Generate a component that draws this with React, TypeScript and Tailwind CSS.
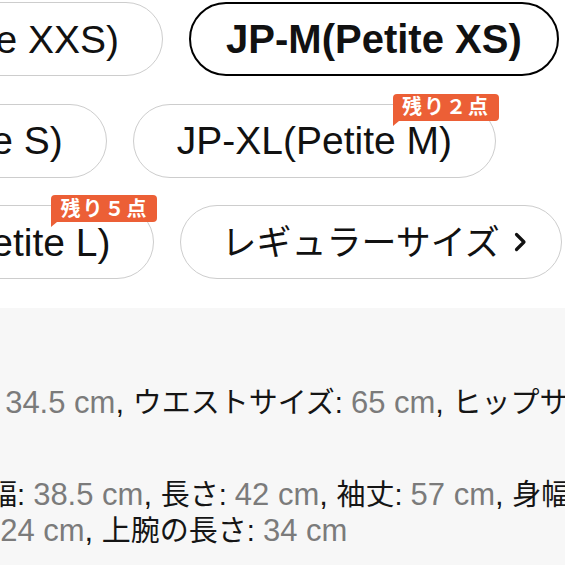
import React from 'react';

type Size = {
  label: string;
  selected?: boolean;
  stock?: string;
};

const rows: Size[][] = [
  [{ label: 'JP-S(Petite XXS)' }, { label: 'JP-M(Petite XS)', selected: true }],
  [{ label: 'JP-L(Petite S)' }, { label: 'JP-XL(Petite M)', stock: '残り２点' }],
  [{ label: 'JP-XXL(Petite L)', stock: '残り５点' }],
];

function StockBadge({ text }: { text: string }) {
  return (
    <span className="absolute -top-[11px] -right-[4px] flex h-[27px] items-center rounded-[4px] rounded-bl-none bg-[#ec5f36] px-[9px] text-[20px] font-bold leading-none tracking-[2px] text-white">
      {text}
      {/* little tail under the badge */}
      <span className="absolute left-0 top-full h-0 w-0 border-r-[6px] border-t-[5px] border-r-transparent border-t-[#ec5f36]" />
    </span>
  );
}

function SizePill({ size }: { size: Size }) {
  if (size.selected) {
    return (
      <div className="relative flex h-[74px] shrink-0 items-center rounded-full border-[2.5px] border-black bg-white px-[35px] text-[40px] font-bold leading-none text-[#111]">
        {size.label}
      </div>
    );
  }
  return (
    <div className="relative flex h-[74px] shrink-0 items-center rounded-full border-[1.5px] border-[#cdcdcd] bg-white px-[43px] text-[39px] leading-none text-[#111]">
      {size.label}
      {size.stock && <StockBadge text={size.stock} />}
    </div>
  );
}

function Measure({ label, value, last }: { label: string; value: string; last?: boolean }) {
  return (
    <>
      <span className="text-[29px] text-[#151515]">{label}: </span>
      <span className="text-[#7b7b7b]">{value}</span>
      {!last && <span className="text-[#151515]">, </span>}
    </>
  );
}

export default function App() {
  return (
    <div className="flex h-[565px] w-[565px] flex-col overflow-hidden bg-white font-['Liberation_Sans','Noto_Sans_CJK_JP',sans-serif]">
      {/* size pills */}
      <div className="flex flex-col gap-[27.5px] pb-[29px] pt-[2px]">
        {rows.map((row, i) => (
          <div key={i} className="-ml-[224px] flex gap-[26px]">
            {row.map((s) => (
              <SizePill key={s.label} size={s} />
            ))}
            {i === 2 && (
              <div className="flex h-[74px] shrink-0 items-center gap-[14px] rounded-full border-[1.5px] border-[#cdcdcd] bg-white pl-[40px] pr-[34px] text-[35px] leading-none text-[#111]">
                レギュラーサイズ
                <svg width="13" height="20" viewBox="0 0 13 20" fill="none">
                  <path d="M2.5 2.5 L10 10 L2.5 17.5" stroke="#111" strokeWidth="3.2" strokeLinecap="round" strokeLinejoin="round" />
                </svg>
              </div>
            )}
          </div>
        ))}
      </div>

      {/* measurements */}
      <div className="flex-1 bg-[#f7f7f7] pt-[77px] text-[31px] leading-[36px]">
        <div className="-ml-[69px] whitespace-nowrap">
          <Measure label="股上" value="34.5 cm" />
          <Measure label="ウエストサイズ" value="65 cm" />
          <Measure label="ヒップサイズ" value="92 cm" last />
        </div>
        <div className="mt-[56px] -ml-[41px] whitespace-nowrap">
          <Measure label="肩幅" value="38.5 cm" />
          <Measure label="長さ" value="42 cm" />
          <Measure label="袖丈" value="57 cm" />
          <Measure label="身幅" value="48 cm" last />
        </div>
        <div className="-ml-[74px] whitespace-nowrap">
          <Measure label="袖口" value="24 cm" />
          <Measure label="上腕の長さ" value="34 cm" last />
        </div>
      </div>
    </div>
  );
}
